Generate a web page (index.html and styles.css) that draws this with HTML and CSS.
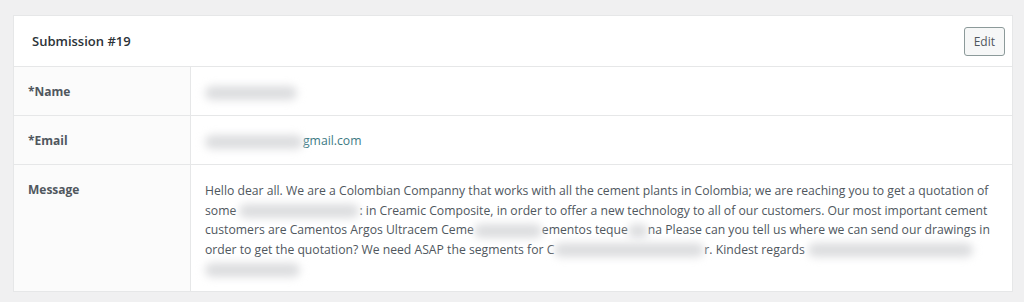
FILE: index.html
```html
<!DOCTYPE html>
<html lang="en">

<head>
    <meta charset="UTF-8">
    <title>Submission #19</title>
    <link rel="stylesheet" href="styles.css">
</head>

<body>
    <main class="card">
        <header class="card-head">
            <h2>Submission #19</h2>
            <button class="edit">Edit</button>
        </header>
        <div class="row">
            <div class="label">*Name</div>
            <div class="value"><span class="blur" style="width: 92px"></span></div>
        </div>
        <div class="row">
            <div class="label">*Email</div>
            <div class="value"><span class="blur" style="width: 98px"></span><a href="#" class="mail">gmail.com</a></div>
        </div>
        <div class="row row-msg">
            <div class="label">Message</div>
            <div class="value msg">
                Hello dear all. We are a Colombian Companny that works with all the cement plants in Colombia; we are reaching you to get a quotation of
                some <span class="blur" style="width: 120px"></span>: in Creamic Composite, in order to offer a new technology to all of our customers. Our most important cement
                customers are Camentos Argos Ultracem Ceme<span class="blur" style="width: 68px"></span>ementos teque<span class="blur" style="width: 20px"></span>na Please can you tell us where we can send our drawings in
                order to get the quotation? We need ASAP the segments for C<span class="blur" style="width: 150px"></span>r. Kindest regards <span class="blur" style="width: 165px"></span>
                <span class="blur" style="width: 95px"></span>
            </div>
        </div>
    </main>
</body>

</html>
```

FILE: styles.css
```css
* {
    box-sizing: border-box;
    padding: 0;
    margin: 0;
}

body {
    background: #f0f0f1;
    font-family: "Open Sans", "Noto Sans", Arial, sans-serif;
    font-size: 12.2px;
    color: #50575e;
    padding: 15px 11px 12px 13px;
}

.card {
    background: #fff;
    border: 1px solid #e6e7e8;
}

.card-head {
    display: flex;
    align-items: center;
    justify-content: space-between;
    height: 51px;
    padding: 0 7px 0 18px;
    border-bottom: 1px solid #e6e7e8;
}

.card-head h2 {
    font-size: 13px;
    font-weight: 600;
    color: #2c3338;
}

.edit {
    font-family: inherit;
    font-size: 12px;
    color: #50575e;
    background: #f6f7f7;
    border: 1px solid #8c9a9a;
    border-radius: 3px;
    padding: 5px 9px;
}

.row {
    display: grid;
    grid-template-columns: 177px 1fr;
    border-bottom: 1px solid #e6e7e8;
}

.row:last-child {
    border-bottom: 0;
}

.label {
    background: #fbfbfb;
    border-right: 1px solid #e6e7e8;
    padding: 16px 14px 14px;
    font-weight: 700;
    color: #50575e;
    font-size: 12px;
    line-height: 18px;
}

.value {
    padding: 16px 14px 14px;
    line-height: 18px;
}

.row-msg .label,
.row-msg .value {
    padding-top: 16px;
    padding-bottom: 12px;
}

.msg {
    line-height: 19.5px;
}

.mail {
    color: #3d7a84;
    text-decoration: none;
}

.blur {
    display: inline-block;
    height: 14px;
    vertical-align: middle;
    background: #dcdddf;
    border-radius: 7px;
    filter: blur(4px);
}
```
